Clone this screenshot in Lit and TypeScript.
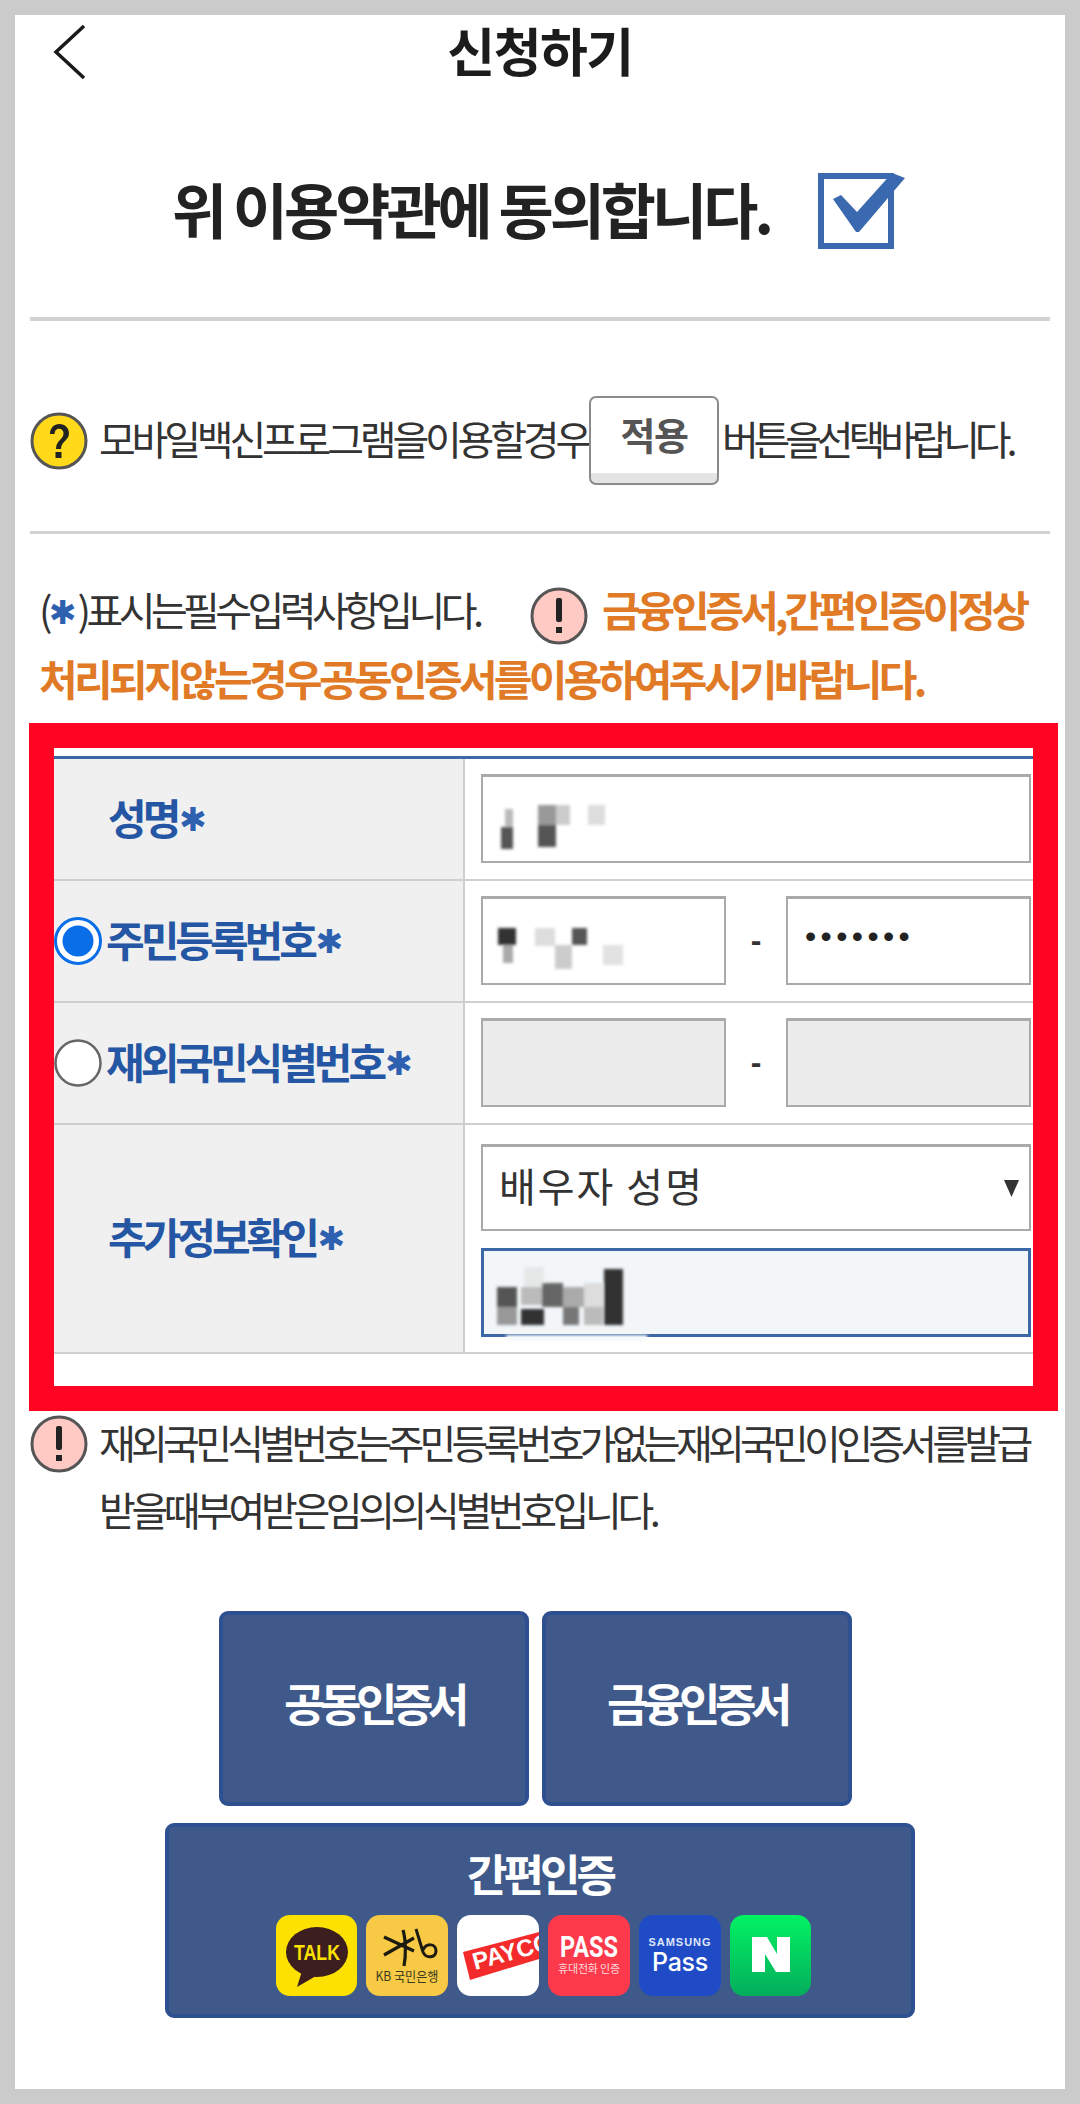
import { LitElement, html, css, svg } from "lit";
import { customElement } from "lit/decorators.js";

type R = [number, number, number, number, string];
const blur = (w: number, h: number, id: string, rects: R[]) => html`
  <svg class="smudge" width=${w} height=${h} viewBox="0 0 ${w} ${h}">
    <defs><filter id=${id} x="-20%" y="-20%" width="140%" height="140%"><feGaussianBlur stdDeviation="1.6"/></filter></defs>
    <g filter="url(#${id})">
      ${rects.map((r) => svg`<rect x=${r[0]} y=${r[1]} width=${r[2]} height=${r[3]} fill=${r[4]}/>`)}
    </g>
  </svg>`;

const hint = (bg: string, mark: string) => html`
  <svg class="hint" width="58" height="58" viewBox="0 0 58 58">
    <circle cx="29" cy="29" r="27" fill=${bg} stroke="#555" stroke-width="3"/>
    ${mark === "?"
      ? svg`<path d="M20 22c0-6 4-10 9.500-10S39 16 39 21.500c0 7-8 7.500-8 15.500h-5c0-9 7.500-9.500 7.500-15.500 0-3-1.800-4.800-4.500-4.800s-4.500 2-4.500 5.300z" fill="#222"/><rect x="25.500" y="40" width="6" height="6" fill="#222"/>`
      : svg`<rect x="26" y="11" width="6" height="24" rx="2" fill="#222"/><rect x="26" y="40" width="6" height="6" fill="#222"/>`}
  </svg>`;

const star = html`<span class="star">✱</span>`;

@customElement("app-root")
export class AppRoot extends LitElement {
  static styles = css`
    :host { display: block; width: 1080px; height: 2104px; box-sizing: border-box; padding: 15px; background: #cbcbcb; font-family: "Noto Sans CJK KR", "Noto Sans", "Liberation Sans", sans-serif; color: #333; overflow: hidden; }
    .page { background: #fff; height: 2074px; width: 1050px; }
    .top { height: 74px; position: relative; display: flex; align-items: center; justify-content: center; }
    .back { position: absolute; left: 38px; top: 9px; }
    .title { font-size: 52px; font-weight: 700; letter-spacing: -1.5px; color: #1c1c1c; line-height: 66px; margin-bottom: 4px; }
    .agree { display: flex; align-items: center; height: 76px; padding: 84px 0 68px 157px; }
    .agree h1 { margin: 0 0 6px; font-size: 60px; font-weight: 700; letter-spacing: -4px; color: #222; line-height: 70px; width: 646px; white-space: nowrap; }
    .hr { height: 4px; background: #d2d2d2; margin: 0 15px; }
    .hr.second { height: 3px; margin-top: 46px; }
    .apply { display: flex; align-items: center; height: 89px; margin: 75px 0 0 15px; font-size: 40px; letter-spacing: -4.2px; white-space: nowrap; }
    .apply span { margin-bottom: 6px; }
    .apply .t1 { margin-left: 11px; width: 490px; }
    .apply .t2 { margin-left: 3px; letter-spacing: -5.2px; }
    .btn-apply { box-sizing: border-box; width: 130px; height: 89px; border: 2px solid #8b8b8b; border-radius: 7px; background: linear-gradient(#fff 0 88%, #e4e4e4 88%); display: flex; align-items: center; justify-content: center; font-size: 38px; font-weight: 700; letter-spacing: -1.5px; color: #555; padding-bottom: 14px; }
    .need { display: flex; align-items: center; height: 57px; margin: 53px 0 0 24px; font-size: 40px; letter-spacing: -4.6px; white-space: nowrap; }
    .need > span { margin-bottom: 14px; }
    .need .t1 { width: 491px; }
    .need .paren-star { color: #2e60b0; font-family: "DejaVu Sans", sans-serif; font-size: 33px; letter-spacing: 0; margin: 0 1px; position: relative; top: -2px; }
    .orange { color: #e07a26; font-weight: 700; }
    .need .orange { margin-left: 14px; font-size: 42px; letter-spacing: -4.1px; }
    .need2 { margin-left: 24px; padding: 14px 0 25px; line-height: 40px; font-size: 42px; letter-spacing: -3.65px; white-space: nowrap; }
    .formbox { margin-left: 14px; width: 1029px; box-sizing: border-box; border: 25px solid #ff0523; background: #fff; padding-top: 8px; height: 688px; }
    .table { border-top: 3px solid #3d68a8; display: grid; grid-template-columns: 411px 1fr; }
    .th { background: #f0f0f0; border-right: 2px solid #cfcfcf; border-bottom: 2px solid #cfcfcf; box-sizing: border-box; display: flex; align-items: center; color: #2456a4; font-size: 42px; font-weight: 700; letter-spacing: -4px; white-space: nowrap; height: 122px; }
    .th.tall { height: 229px; }
    .th .pad, .th .label { margin-bottom: 6px; }
    .th .pad { margin-left: 54px; }
    .th .label { margin-left: 4px; }
    .star { color: #2e60b0; font-family: "DejaVu Sans", sans-serif; font-size: 33px; font-weight: 700; letter-spacing: 0; margin-left: 2px; }
    .td { border-bottom: 2px solid #cfcfcf; box-sizing: border-box; display: flex; align-items: flex-start; height: 122px; padding: 15px 2px 0 16px; }
    .td.tall { height: 229px; flex-direction: column; padding-top: 19px; gap: 17px; }
    .input { box-sizing: border-box; border: 2px solid #aaa; border-top-width: 3px; background: #fff; height: 89px; position: relative; display: flex; align-items: center; padding-left: 16px; flex: none; }
    .wide { width: 550px; }
    .half { width: 245px; }
    .off { background: #ececec; }
    .dash { width: 60px; text-align: center; font-size: 32px; font-weight: 700; line-height: 89px; color: #333; font-family: "Liberation Sans", sans-serif; }
    .smudge { position: absolute; left: 0; top: 0; overflow: visible; }
    .dots { font-family: "Liberation Sans", sans-serif; font-size: 32px; letter-spacing: 4.4px; color: #222; margin-left: 1px; line-height: 1; position: relative; top: -5px; }
    .select { font-size: 40px; letter-spacing: 2px; color: #333; height: 87px; justify-content: space-between; padding-right: 10px; }
    .select span { position: relative; top: -3px; }
    .focus { border: 3px solid #3d68a8; background: #f2f6f8; }
    .notice { display: flex; margin: 4px 0 0 15px; font-size: 40px; letter-spacing: -4.75px; white-space: nowrap; }
    .notice .lines { margin-left: 11px; display: flex; flex-direction: column; gap: 13px; }
    .notice .lines div { height: 54px; line-height: 54px; }
    .notice .lines div + div { letter-spacing: -4.4px; }
    .auth { display: flex; gap: 13px; margin: 75px 0 0 204px; }
    .auth div, .simple { box-sizing: border-box; background: #3f5a8a; border: 4px solid #2f5090; border-radius: 9px; color: #fff; font-weight: 700; font-size: 45px; letter-spacing: -5.4px; }
    .auth div { width: 310px; height: 195px; display: flex; justify-content: center; padding-top: 55px; line-height: 66px; }
    .simple { width: 750px; height: 195px; margin: 17px 0 0 150px; display: flex; flex-direction: column; align-items: center; padding-top: 15px; font-size: 44px; letter-spacing: -4px; line-height: 62px; }
    .brands { display: flex; gap: 9px; margin-top: 11px; align-self: flex-start; margin-left: 107px; letter-spacing: 0; font-weight: 400; }
    .brands svg { display: block; border-radius: 14px; }
  `;

  render() {
    return html`
      <div class="page">
        <div class="top">
          <svg class="back" width="34" height="56" viewBox="0 0 34 56"><path d="M31 2 3 28l28 26" fill="none" stroke="#1a1a1a" stroke-width="3.500"/></svg>
          <div class="title">신청하기</div>
        </div>

        <div class="agree">
          <h1>위 이용약관에 동의합니다.</h1>
          <svg width="90" height="76" viewBox="0 0 90 76">
            <rect x="3" y="3" width="70" height="70" fill="#fff" stroke="#3a69b0" stroke-width="6"/>
            <path d="M15 26l8-4 16 17L74 0l13 5-46 54h-3z" fill="#3a69b0"/>
          </svg>
        </div>
        <div class="hr"></div>

        <div class="apply">
          ${hint("#ffd91a", "?")}
          <span class="t1">모바일백신프로그램을이용할경우</span>
          <div class="btn-apply">적용</div>
          <span class="t2">버튼을선택바랍니다.</span>
        </div>
        <div class="hr second"></div>

        <div class="need">
          <span class="t1">(<span class="paren-star">✱</span>)표시는필수입력사항입니다.</span>
          ${hint("#ffc9c4", "!")}
          <span class="orange">금융인증서,간편인증이정상</span>
        </div>
        <div class="need2 orange">처리되지않는경우공동인증서를이용하여주시기바랍니다.</div>

        <div class="formbox">
          <div class="table">
            <div class="th"><span class="pad">성명</span>${star}</div>
            <div class="td">
              <div class="input wide">
                ${blur(200, 85, "b1", [
                  [22, 32, 8, 20, "#bbb"], [18, 50, 12, 22, "#555"],
                  [55, 28, 18, 20, "#999"], [55, 48, 18, 22, "#555"],
                  [73, 28, 14, 20, "#ccc"], [105, 28, 17, 20, "#ddd"],
                ])}
              </div>
            </div>

            <div class="th">
              <svg class="radio" width="48" height="48" viewBox="0 0 48 48"><circle cx="24" cy="24" r="22.500" fill="#fff" stroke="#0a6ee8" stroke-width="3"/><circle cx="24" cy="24" r="15.500" fill="#0a6ee8"/></svg>
              <span class="label">주민등록번호</span>${star}
            </div>
            <div class="td">
              <div class="input half">
                ${blur(150, 85, "b2", [
                  [15, 29, 18, 17, "#333"], [20, 46, 10, 18, "#aaa"],
                  [52, 29, 20, 18, "#ddd"], [72, 46, 17, 24, "#ccc"],
                  [89, 29, 15, 17, "#555"], [120, 46, 20, 20, "#e2e2e2"],
                ])}
              </div>
              <div class="dash">-</div>
              <div class="input half"><span class="dots">•••••••</span></div>
            </div>

            <div class="th">
              <svg class="radio" width="48" height="48" viewBox="0 0 48 48"><circle cx="24" cy="24" r="22.500" fill="#fff" stroke="#666" stroke-width="2.500"/></svg>
              <span class="label">재외국민식별번호</span>${star}
            </div>
            <div class="td">
              <div class="input half off"></div>
              <div class="dash">-</div>
              <div class="input half off"></div>
            </div>

            <div class="th tall"><span class="pad">추가정보확인</span>${star}</div>
            <div class="td tall">
              <div class="input wide select"><span>배우자 성명</span>
                <svg width="15" height="17" viewBox="0 0 15 17"><path d="M0 0h15l-7.500 17z" fill="#333"/></svg>
              </div>
              <div class="input wide focus">
                ${blur(170, 90, "b3", [
                  [40, 16, 20, 20, "#e6e8e8"], [13, 36, 20, 20, "#555"], [37, 36, 21, 18, "#bbb"], [58, 32, 21, 24, "#666"], [79, 36, 21, 20, "#aaa"], [100, 32, 19, 24, "#ddd"], [120, 18, 19, 56, "#333"],
                  [13, 56, 20, 18, "#999"], [37, 58, 23, 16, "#333"], [79, 56, 16, 18, "#777"], [100, 56, 19, 18, "#bbb"],
                  [22, 84, 141, 6, "#f6f9fa"],
                ])}
              </div>
            </div>
          </div>
        </div>

        <div class="notice">
          ${hint("#ffc9c4", "!")}
          <div class="lines">
            <div>재외국민식별번호는주민등록번호가없는재외국민이인증서를발급</div>
            <div>받을때부여받은임의의식별번호입니다.</div>
          </div>
        </div>

        <div class="auth">
          <div>공동인증서</div>
          <div>금융인증서</div>
        </div>

        <div class="simple">
          <span>간편인증</span>
          <div class="brands">
            <svg width="81" height="81" viewBox="0 0 81 81">
              <rect width="81" height="81" fill="#fde100"/>
              <ellipse cx="41" cy="37" rx="31" ry="25" fill="#3c1e1e"/>
              <path d="M26 56l-5 16 19-11z" fill="#3c1e1e"/>
              <text x="41" y="45" text-anchor="middle" font-family="Liberation Sans, sans-serif" font-size="22" font-weight="700" textLength="46" lengthAdjust="spacingAndGlyphs" fill="#fde100">TALK</text>
            </svg>
            <svg width="82" height="81" viewBox="0 0 82 81">
              <rect width="82" height="81" fill="#f7c945"/>
              <path d="M18 22l30 14M18 40l30-17M37 15c3 10 3 26 1 36" stroke="#1b1b10" stroke-width="3.200" fill="none"/>
              <path d="M50 14l7 23c3 7 13 6 13-1 0-8-10-8-13-1" stroke="#1b1b10" stroke-width="3" fill="none"/>
              <text x="41" y="66" text-anchor="middle" font-family="Noto Sans CJK KR, sans-serif" font-size="13" textLength="63" lengthAdjust="spacingAndGlyphs" fill="#3a3a22">KB 국민은행</text>
            </svg>
            <svg width="82" height="81" viewBox="0 0 82 81">
              <rect width="82" height="81" fill="#fff"/>
              <path d="M6 37 82 17v27L13 65z" fill="#f42b2b"/>
              <text x="18" y="55" transform="rotate(-15 18 55)" font-family="Liberation Sans, sans-serif" font-size="24" font-weight="700" fill="#fff">PAYCO</text>
            </svg>
            <svg width="82" height="81" viewBox="0 0 82 81">
              <rect width="82" height="81" fill="#fd3a4c"/>
              <text x="41" y="42" text-anchor="middle" font-family="Roboto, sans-serif" font-size="29" font-weight="700" textLength="58" lengthAdjust="spacingAndGlyphs" fill="#fff">PASS</text>
              <text x="41" y="58" text-anchor="middle" font-family="Noto Sans CJK KR, sans-serif" font-size="11" letter-spacing="-.2" fill="#ffd9dc">휴대전화 인증</text>
            </svg>
            <svg width="82" height="81" viewBox="0 0 82 81">
              <rect width="82" height="81" fill="#1f4cc6"/>
              <text x="41" y="31" text-anchor="middle" font-family="Liberation Sans, sans-serif" font-size="11" font-weight="700" letter-spacing="1" fill="#dfe6fa">SAMSUNG</text>
              <text x="41" y="56" text-anchor="middle" font-family="Inter, sans-serif" font-size="25" font-weight="500" letter-spacing="-.3" fill="#fff">Pass</text>
            </svg>
            <svg width="81" height="81" viewBox="0 0 81 81">
              <defs><linearGradient id="ng" x1="0" y1="0" x2="0" y2="1"><stop offset="0" stop-color="#03f263"/><stop offset="1" stop-color="#04ad5c"/></linearGradient></defs>
              <rect width="81" height="81" fill="url(#ng)"/>
              <path d="M22 22h15l10 17V22h13v35H46L35 39v18H22z" fill="#fff"/>
            </svg>
          </div>
        </div>
      </div>
    `;
  }
}
